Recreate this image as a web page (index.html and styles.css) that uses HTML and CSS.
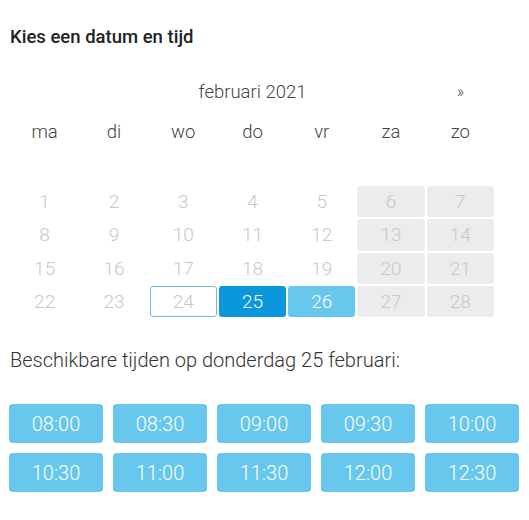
FILE: index.html
```html
<!DOCTYPE html>
<html lang="nl">
<head>
  <meta charset="UTF-8">
  <meta name="viewport" content="width=device-width, initial-scale=1.0">
  <title>Afspraak maken</title>
  <link rel="stylesheet" href="styles.css">
</head>
<body>
  <div class="booking">
    <h3 class="title">Kies een datum en tijd</h3>

    <div class="calendar">
      <div class="cal-nav">
        <span class="prev"></span>
        <span class="month">februari 2021</span>
        <span class="next">&raquo;</span>
      </div>
      <div class="cal-head">
        <span>ma</span><span>di</span><span>wo</span><span>do</span><span>vr</span><span>za</span><span>zo</span>
      </div>
      <div class="cal-days">
        <span class="day">1</span><span class="day">2</span><span class="day">3</span><span class="day">4</span><span class="day">5</span><span class="day closed">6</span><span class="day closed">7</span>
        <span class="day">8</span><span class="day">9</span><span class="day">10</span><span class="day">11</span><span class="day">12</span><span class="day closed">13</span><span class="day closed">14</span>
        <span class="day">15</span><span class="day">16</span><span class="day">17</span><span class="day">18</span><span class="day">19</span><span class="day closed">20</span><span class="day closed">21</span>
        <span class="day">22</span><span class="day">23</span><span class="day today">24</span><span class="day selected">25</span><span class="day available">26</span><span class="day closed">27</span><span class="day closed">28</span>
      </div>
    </div>

    <p class="times-label">Beschikbare tijden op donderdag 25 februari:</p>

    <div class="times">
      <button>08:00</button>
      <button>08:30</button>
      <button>09:00</button>
      <button>09:30</button>
      <button>10:00</button>
      <button>10:30</button>
      <button>11:00</button>
      <button>11:30</button>
      <button>12:00</button>
      <button>12:30</button>
    </div>
  </div>
</body>
</html>
```

FILE: styles.css
```css
body {
  font-family: Roboto, "Liberation Sans", Arial, sans-serif;
  margin: 0;
  padding: 0 9px;
  background-color: #fff;
  color: #333;
}
.title {
  font-size: 18.5px;
  font-weight: 500;
  line-height: 22px;
  margin: 26px 0 0 1px;
  color: #222;
}
.calendar {
  width: 483px;
  margin: 24px 0 0 2px;
  font-weight: 300;
  font-size: 19px;
}
.cal-nav,
.cal-head,
.cal-days {
  display: grid;
  grid-template-columns: repeat(7, 1fr);
  column-gap: 2px;
  text-align: center;
}
.cal-nav {
  height: 40px;
  line-height: 40px;
  color: #444;
}
.month {
  grid-column: 2 / span 5;
  font-size: 18.5px;
}
.next {
  font-size: 16px;
}
.cal-head {
  height: 40px;
  line-height: 40px;
  margin-bottom: 34px;
  color: #444;
  font-size: 18.5px;
}
.cal-days {
  grid-auto-rows: 31.3px;
  row-gap: 2px;
}
.day {
  line-height: 31px;
  color: #c8c8c8;
  border-radius: 3px;
  box-sizing: border-box;
}
.day.closed {
  background-color: #ececec;
}
.day.today {
  border: 1px solid #6cbfdc;
  line-height: 29px;
}
.day.selected {
  background-color: #0b97db;
  color: #fff;
}
.day.available {
  background-color: #67c7ec;
  color: #fff;
}
.times-label {
  font-size: 20px;
  font-weight: 300;
  line-height: 24px;
  margin: 31px 0 0 1px;
  color: #333;
}
.times {
  display: grid;
  grid-template-columns: repeat(5, 94px);
  gap: 10px;
  margin-top: 32px;
}
.times button {
  height: 39px;
  background-color: #67c7ec;
  color: #fff;
  border: none;
  border-radius: 4px;
  font-family: inherit;
  font-size: 20px;
  font-weight: 300;
  padding: 0;
  cursor: pointer;
}
.times button:hover {
  background-color: #4fb9e3;
}
```
